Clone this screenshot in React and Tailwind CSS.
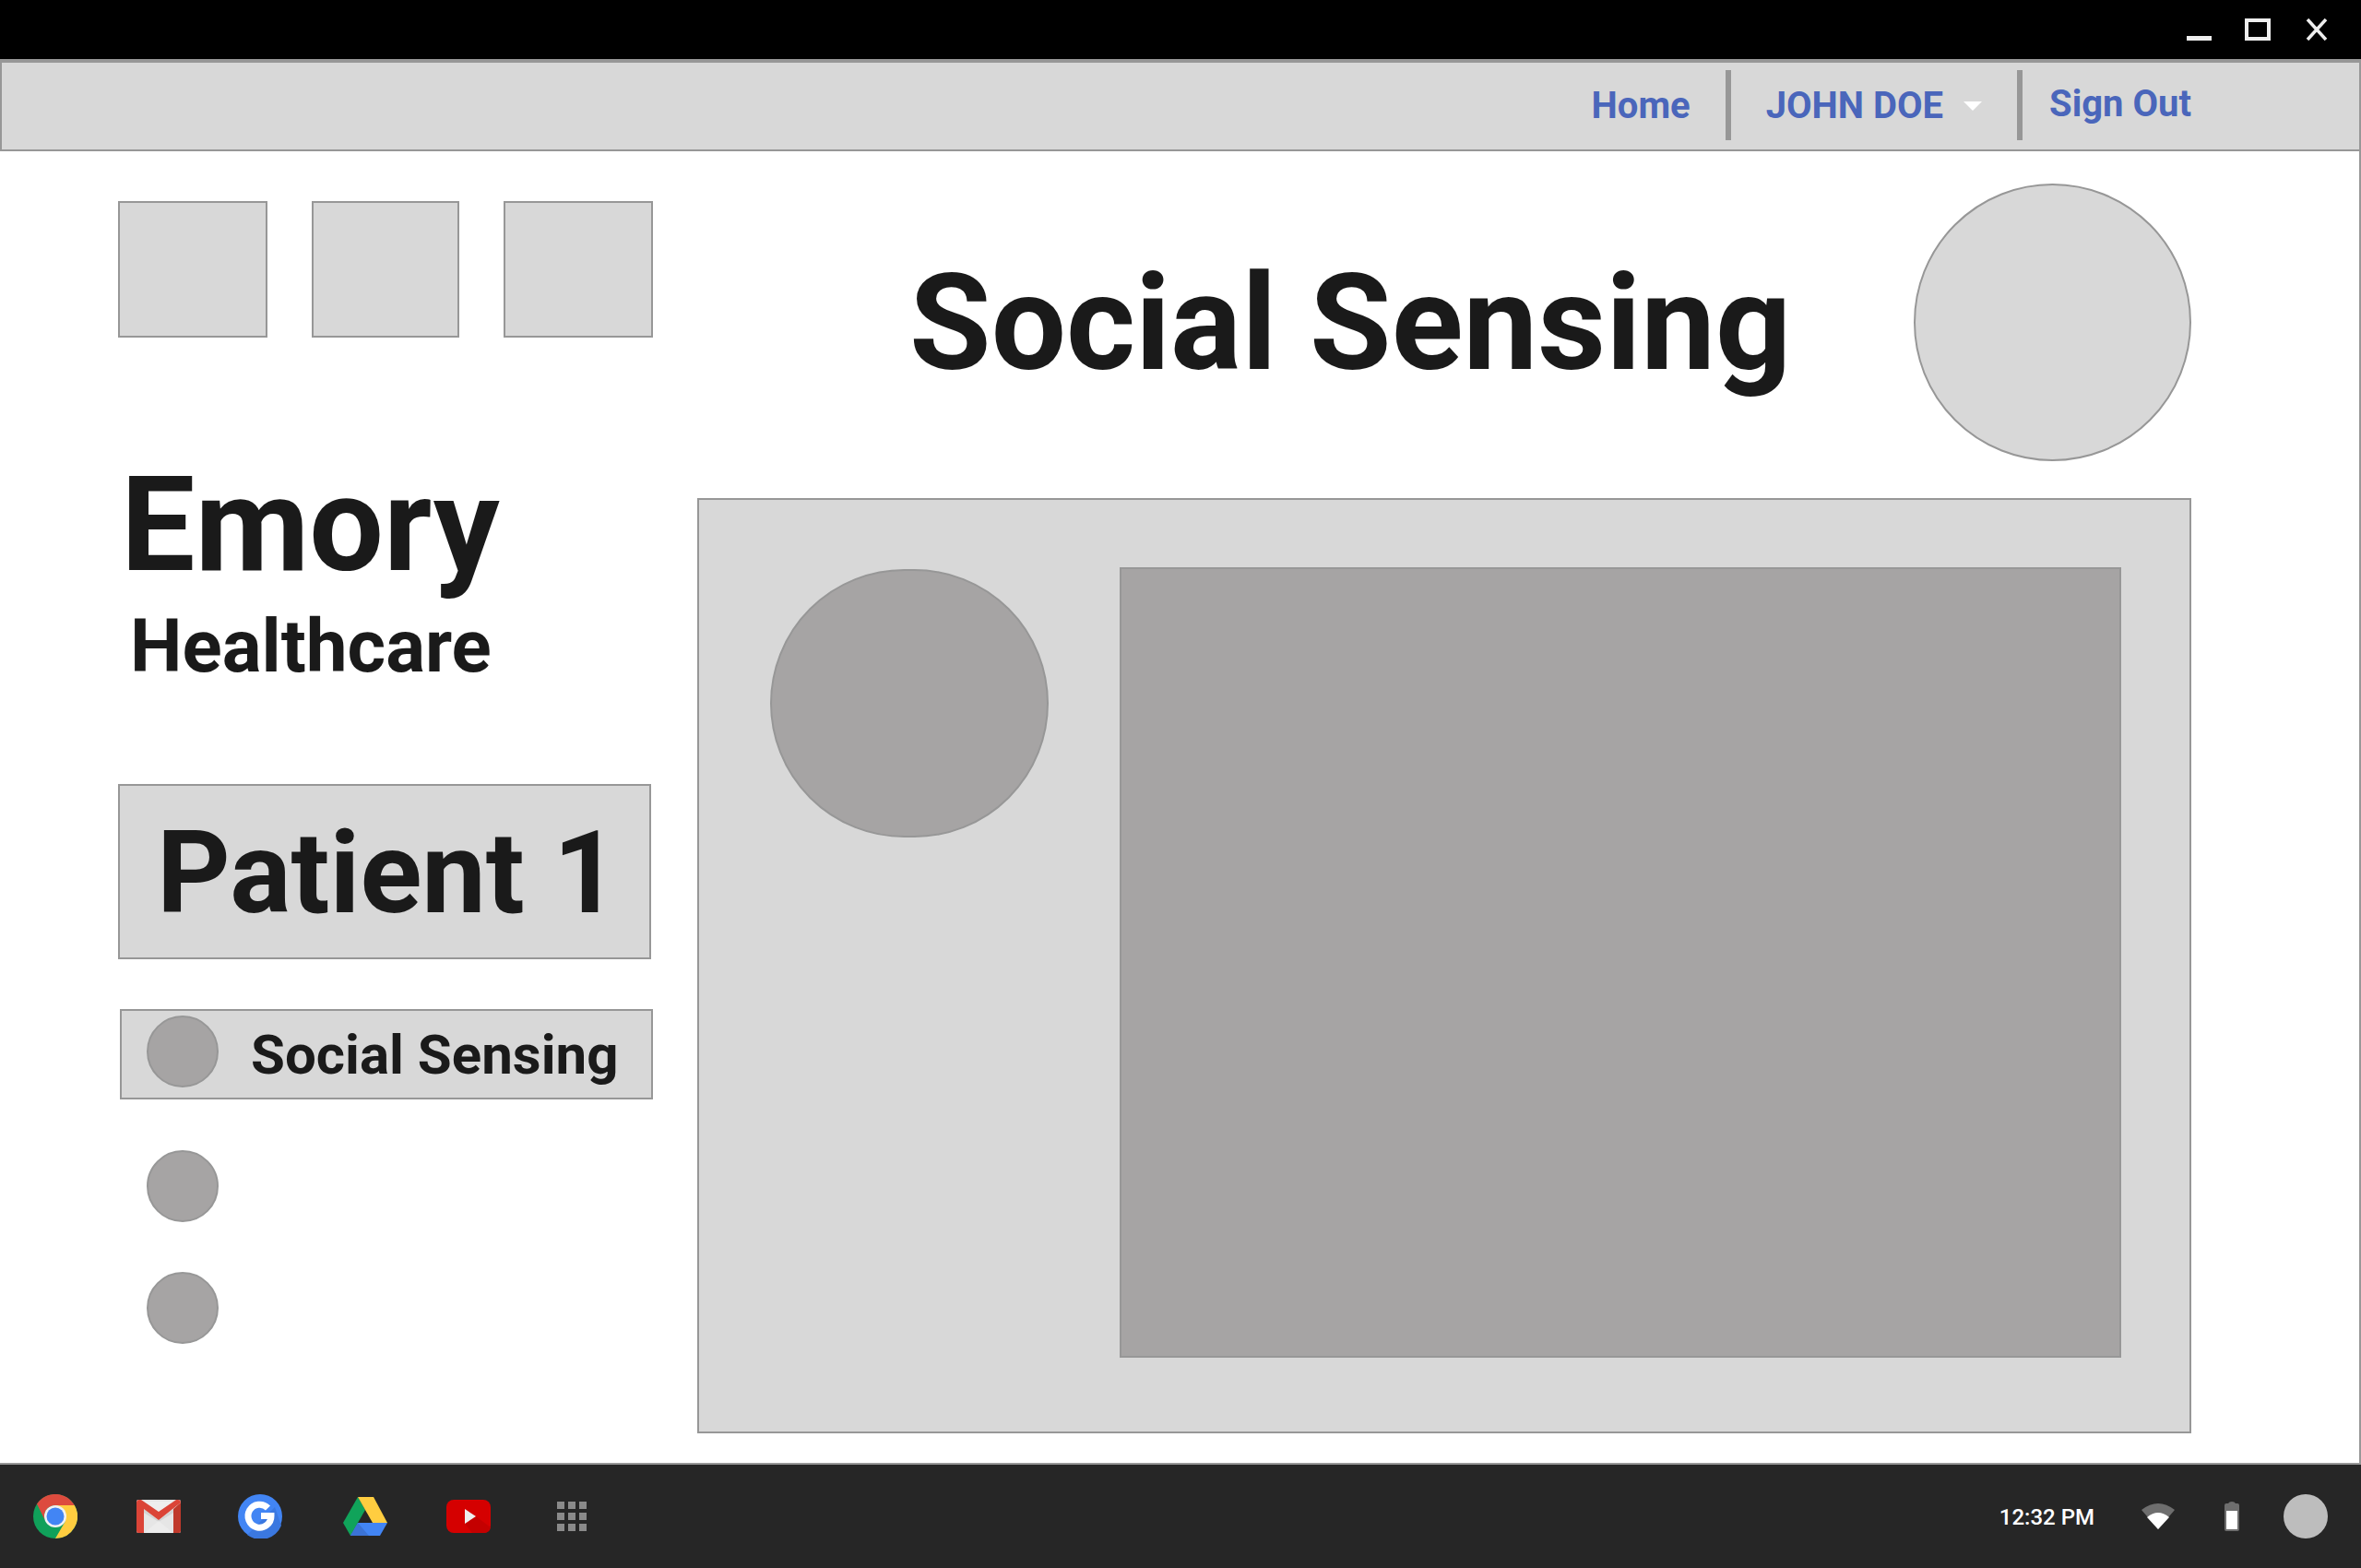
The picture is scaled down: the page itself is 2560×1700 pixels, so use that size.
import React from 'react';

const FONT = 'font-["Roboto","Liberation_Sans",sans-serif]';

const ChromeIcon = () => (
  <svg width="48" height="48" viewBox="0 0 48 48">
    <circle cx="24" cy="24" r="24" fill="#10a05a" />
    <path d="M4 10.6 A24 24 0 0 1 44.8 12 H24 A12 12 0 0 0 13.4 29.6 Z" fill="#dd4b3e" />
    <path d="M24 12 H44.8 A24 24 0 0 1 24 48 L34.6 29.8 Z" fill="#ffcd40" />
    <circle cx="24" cy="24" r="12" fill="#f1f1f1" />
    <circle cx="24" cy="24" r="9.5" fill="#4285f4" />
  </svg>
);

const GmailIcon = () => (
  <svg width="48" height="36" viewBox="0 0 48 36">
    <rect width="48" height="36" rx="2" fill="#e6e6e6" />
    <path d="M2 2 H46 L24 16 Z" fill="#eeeeee" />
    <path d="M8 10 L24 22 L40 10 V14 L24 24 L40 36 H8 L24 24 L8 14 Z" fill="#d4d4d4" />
    <path d="M8 36 L24 23 L40 36 Z" fill="#ececec" />
    <path d="M0 3 Q0 0 3 0 H5 L24 13 L43 0 H45 Q48 0 48 3 L24 22 L8 10 V36 H2 Q0 36 0 34 Z" fill="#db4437" />
    <path d="M48 3 V34 Q48 36 46 36 H40 V10 Z" fill="#c0392b" />
  </svg>
);

const GoogleIcon = () => (
  <svg width="48" height="48" viewBox="0 0 48 48">
    <circle cx="24" cy="24" r="24" fill="#4285f4" />
    <path d="M40 14 L47 34 A24 24 0 0 1 10 44 Z" fill="#3b78e0" />
    <path d="M32.5 15 A12.5 12.5 0 1 0 36 23.5 H25" fill="none" stroke="#ffffff" strokeWidth="7" />
  </svg>
);

const DriveIcon = () => (
  <svg width="48" height="42" viewBox="0 0 48 42">
    <path d="M16 0 L0 28 L8 42 L24 14 Z" fill="#10a35a" />
    <path d="M16 0 H33 L48 28 H32 Z" fill="#ffcd40" />
    <path d="M8 42 H40 L48 28 H16 Z" fill="#4285f4" />
    <path d="M8 42 H28 L16 28 Z" fill="#3b73d6" />
  </svg>
);

const YoutubeIcon = () => (
  <svg width="48" height="36" viewBox="0 0 48 36">
    <rect width="48" height="36" rx="8" fill="#d50000" />
    <path d="M32 18 L48 30 Q47 36 40 36 H28 L20 26 Z" fill="#c40000" />
    <path d="M20 10 L32 18 L20 26 Z" fill="#eeeeee" />
  </svg>
);

const AppsIcon = () => (
  <div className="grid grid-cols-3 gap-1 w-8 h-8">
    {Array.from({ length: 9 }).map((_, i) => (
      <div key={i} className="w-2 h-2 bg-[#8a8a8a]" />
    ))}
  </div>
);

const WifiIcon = () => (
  <svg width="36" height="28" viewBox="0 0 36 28">
    <path d="M0 7 Q18 -7 36 7 L18 28 Z" fill="#6e6e6e" />
    <path d="M6 15 Q18 5 30 15 L18 28 Z" fill="#ffffff" />
  </svg>
);

const BatteryIcon = () => (
  <svg width="16" height="32" viewBox="0 0 16 32">
    <path d="M0 4 Q0 2 2 2 H4 Q5 0 8 0 Q11 0 12 2 H14 Q16 2 16 4 V30 Q16 32 14 32 H2 Q0 32 0 30 Z" fill="#6e6e6e" />
    <rect x="2" y="10" width="12" height="20" fill="#ffffff" />
  </svg>
);

const SideDot = ({ className = '' }) => (
  <div className={`w-[78px] h-[78px] rounded-full bg-[#a6a4a4] border-2 border-[#979797] ${className}`} />
);

const Box = ({ width }) => (
  <div className={`${width} h-[148px] bg-[#d8d8d8] border-2 border-[#979797]`} />
);

export default function App() {
  return (
    <div className={`${FONT} w-[2560px] h-[1700px] flex flex-col bg-white overflow-hidden`}>
      {/* window title bar */}
      <div className="h-16 shrink-0 bg-black flex justify-end items-start pr-9 pt-5">
        <div className="w-[27px] h-6 border-b-[5px] border-[#eeeeee]" />
        <div className="w-7 h-6 ml-9 border-4 border-[#eeeeee]" />
        <svg width="24" height="24" viewBox="0 0 24 24" className="ml-[38px]">
          <path d="M2 1 L22 23 M22 1 L2 23" stroke="#eeeeee" strokeWidth="3.5" fill="none" />
        </svg>
      </div>

      {/* top nav */}
      <div className="h-[100px] shrink-0 bg-[#d8d8d8] border-2 border-t-4 border-[#979797] flex justify-end items-center pr-[182px] text-[40px] leading-none font-bold text-[#4a66bb]">
        <span>Home</span>
        <div className="w-1.5 h-[76px] bg-[#979797] ml-[38px] mr-[38px] -mt-0.5" />
        <span>JOHN DOE</span>
        <div className="ml-[22px] w-0 h-0 border-x-[10px] border-x-transparent border-t-[10px] border-t-white" />
        <div className="w-1.5 h-[76px] bg-[#979797] ml-[38px] mr-[29px] -mt-0.5" />
        <span className="-mt-1">Sign Out</span>
      </div>

      {/* page */}
      <div className="flex-1 flex border-r-2 border-b-2 border-[#979797] pl-[128px] text-[#1a1a1a]">
        <div className="w-[580px] shrink-0 pt-[54px]">
          <div className="flex gap-12">
            <Box width="w-[162px]" />
            <Box width="w-[160px]" />
            <Box width="w-[162px]" />
          </div>
          <div className="mt-[132px] ml-[3px] text-[143px] leading-[142px] font-bold">Emory</div>
          <div className="mt-[21px] ml-[13px] text-[80px] leading-[80px] font-bold">Healthcare</div>
          <div className="mt-[109px] w-[578px] h-[190px] bg-[#d8d8d8] border-2 border-[#979797] flex items-center pl-[40px] pt-[3px] text-[124px] font-bold leading-none">
            Patient 1
          </div>
          <div className="mt-[54px] ml-[2px] h-[98px] bg-[#d8d8d8] border-2 border-[#979797] flex items-center pl-[27px] gap-[35px] text-[60px] font-bold leading-none">
            <SideDot className="-mt-[6px]" />
            <span className="mt-0.5">Social Sensing</span>
          </div>
          <div className="mt-[55px] ml-[31px] flex flex-col gap-[54px]">
            <SideDot />
            <SideDot />
          </div>
        </div>

        <div className="ml-12 w-[1620px] shrink-0 pt-[35px]">
          <div className="flex items-center justify-between pl-[230px]">
            <div className="mt-0.5 text-[144px] leading-none font-bold">Social Sensing</div>
            <div className="w-[301px] h-[301px] rounded-full bg-[#d8d8d8] border-2 border-[#979797]" />
          </div>
          <div className="mt-10 h-[1014px] bg-[#d8d8d8] border-2 border-[#979797] flex items-start pl-[77px] pt-[73px]">
            <div className="mt-0.5 w-[302px] h-[291px] rounded-full bg-[#a6a4a4] border-2 border-[#979797]" />
            <div className="ml-[77px] w-[1086px] h-[857px] bg-[#a6a4a4] border-2 border-[#979797]" />
          </div>
        </div>
      </div>

      {/* shelf */}
      <div className="h-[112px] shrink-0 bg-[#262626] flex items-center pl-9 pr-9">
        <ChromeIcon />
        <div className="ml-16"><GmailIcon /></div>
        <div className="ml-[62px]"><GoogleIcon /></div>
        <div className="ml-[66px]"><DriveIcon /></div>
        <div className="ml-16"><YoutubeIcon /></div>
        <div className="ml-[72px]"><AppsIcon /></div>
        <span className="ml-auto mt-0.5 text-2xl leading-none font-medium text-white">12:32 PM</span>
        <div className="ml-[51px]"><WifiIcon /></div>
        <div className="ml-[54px]"><BatteryIcon /></div>
        <div className="ml-12 w-12 h-12 rounded-full bg-[#bdbdbd]" />
      </div>
    </div>
  );
}
